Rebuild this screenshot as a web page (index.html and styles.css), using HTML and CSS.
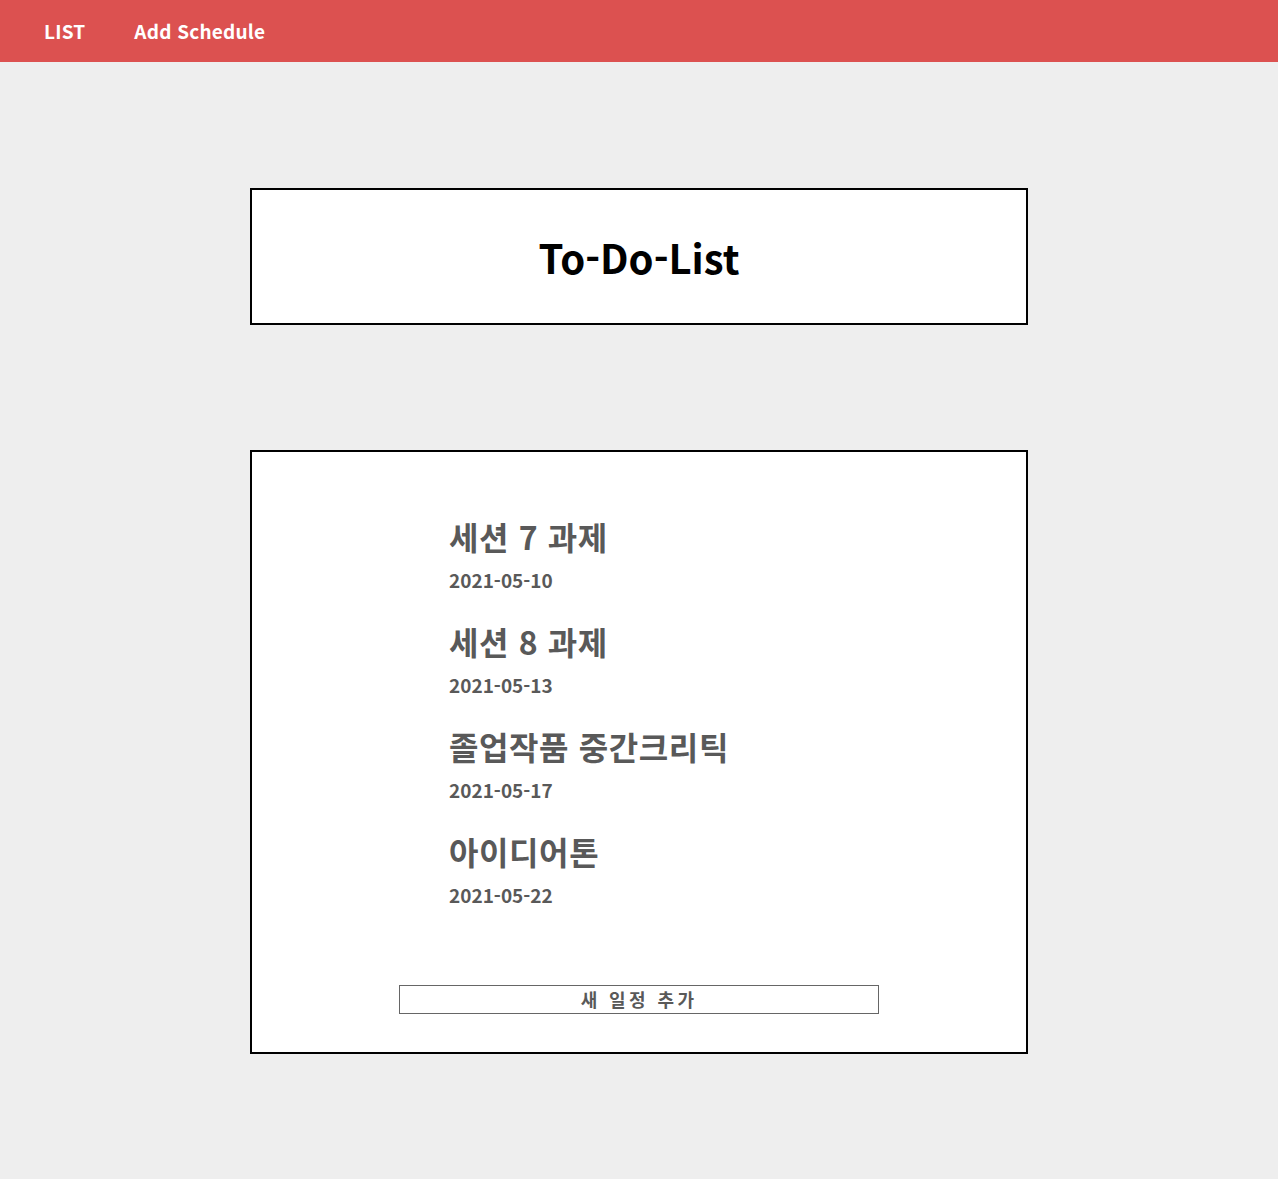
FILE: index.html
```html
<!DOCTYPE html>
<html lang="ko">
<head>
<meta charset="utf-8">
<title>To-Do-List</title>
<link rel="stylesheet" href="styles.css">
</head>
<body>
<header class="topbar">
  <nav class="nav">
    <a class="nav-link" href="#">LIST</a>
    <a class="nav-link" href="#">Add Schedule</a>
  </nav>
</header>
<main class="page">
  <section class="card title-card">
    <h1 class="title">To-Do-List</h1>
  </section>
  <section class="card list-card">
    <ul class="todo-list">
      <li class="todo">
        <h2 class="todo-title">세션 7 과제</h2>
        <p class="todo-date">2021-05-10</p>
      </li>
      <li class="todo">
        <h2 class="todo-title">세션 8 과제</h2>
        <p class="todo-date">2021-05-13</p>
      </li>
      <li class="todo">
        <h2 class="todo-title">졸업작품 중간크리틱</h2>
        <p class="todo-date">2021-05-17</p>
      </li>
      <li class="todo">
        <h2 class="todo-title">아이디어톤</h2>
        <p class="todo-date">2021-05-22</p>
      </li>
    </ul>
    <button class="add-btn" type="button">새 일정 추가</button>
  </section>
</main>
</body>
</html>
```

FILE: styles.css
```css
html, body {
  margin: 0;
  padding: 0;
}
body {
  background: #eeeeee;
  font-family: "Noto Sans CJK KR", "Noto Sans", sans-serif;
  min-height: 1179px;
}
.topbar {
  background: #dc5150;
  height: 62px;
  display: flex;
  align-items: center;
}
.nav {
  display: flex;
  gap: 49px;
  padding-left: 44px;
}
.nav-link {
  color: #ffffff;
  text-decoration: none;
  font-weight: 700;
  font-size: 19px;
  line-height: 24px;
  letter-spacing: 0.2px;
}
.page {
  display: flex;
  flex-direction: column;
  align-items: center;
  gap: 125px;
  padding: 126px 0 126px;
}
.card {
  width: 778px;
  box-sizing: border-box;
  background: #ffffff;
  border: 2px solid #000000;
}
.title-card {
  height: 137px;
  display: flex;
  align-items: center;
  justify-content: center;
}
.title {
  margin: 0;
  font-size: 40px;
  font-weight: 700;
  color: #000000;
  line-height: 1;
}
.list-card {
  height: 604px;
  padding: 60px 0 0;
  display: flex;
  flex-direction: column;
  align-items: center;
}
.todo-list {
  list-style: none;
  margin: 0;
  padding: 0 0 0 197px;
  align-self: stretch;
  color: #595959;
}
.todo {
  height: 105px;
}
.todo-title {
  margin: 0;
  font-size: 32px;
  font-weight: 700;
  line-height: 48px;
  letter-spacing: 0.6px;
}
.todo-date {
  margin: 0;
  padding-top: 4px;
  font-size: 19px;
  font-weight: 700;
  line-height: 31px;
}
.add-btn {
  margin-top: 53px;
  width: 480px;
  height: 29px;
  background: #ffffff;
  border: 1px solid #666666;
  color: #595959;
  font-family: "Noto Sans CJK KR", sans-serif;
  font-size: 18px;
  font-weight: 700;
  letter-spacing: 3.4px;
  padding: 0;
  line-height: 27px;
}
```
